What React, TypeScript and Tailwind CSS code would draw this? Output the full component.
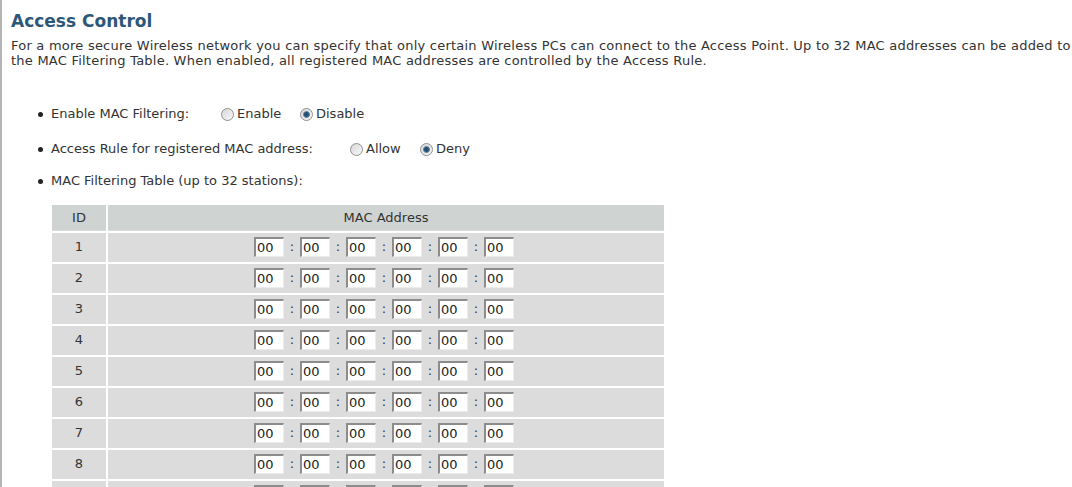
import React from "react";

function Radio({ checked }: { checked?: boolean }) {
  return (
    <span className="inline-flex w-[13px] h-[13px] rounded-full border border-[#8e8f8f] bg-gradient-to-br from-[#d8d8d8] to-[#f8f8f8] items-center justify-center mr-[3px] shrink-0">
      {checked && <span className="block w-[7px] h-[7px] rounded-full bg-[#2a4f6e] border border-[#5c87aa]" />}
    </span>
  );
}

function MacInput({ blank }: { blank?: boolean }) {
  return (
    <span className="inline-flex w-[30px] h-[20px] bg-white border-t-2 border-l-2 border-t-[#8c8c8c] border-l-[#8c8c8c] border-r border-b border-r-[#ececec] border-b-[#ececec] items-center pl-[1px] text-[13px] leading-none text-[#222]">
      {blank ? "" : "00"}
    </span>
  );
}

export default function App() {
  const rows = [1, 2, 3, 4, 5, 6, 7, 8, 9];
  return (
    <div className="w-[1072px] h-[487px] overflow-hidden bg-white border-l-2 border-[#b4b4b4] text-[#333] text-[13px] font-['DejaVu_Sans','Verdana',sans-serif]">
      <div className="pl-[9px] pt-[11px]">
        <h1 className="text-[17px] font-bold text-[#2d5778] leading-[20px]">Access Control</h1>
        <p className="mt-[7px] leading-[15px] whitespace-nowrap tracking-[0.23px]">
          For a more secure Wireless network you can specify that only certain Wireless PCs can connect to the Access Point. Up to 32 MAC addresses can be added to
          <br />
          the MAC Filtering Table. When enabled, all registered MAC addresses are controlled by the Access Rule.
        </p>
      </div>
      <div className="pl-[36px] mt-[36px]">
        <div className="flex items-center h-[20px]">
          <span className="w-[5px] h-[5px] rounded-full bg-[#222] mr-[8px]" />
          <span className="w-[170px]">Enable MAC Filtering:</span>
          <span className="flex items-center w-[79px]"><Radio />Enable</span>
          <span className="flex items-center"><Radio checked />Disable</span>
        </div>
        <div className="flex items-center h-[20px] mt-[15px]">
          <span className="w-[5px] h-[5px] rounded-full bg-[#222] mr-[8px]" />
          <span className="w-[299px]">Access Rule for registered MAC address:</span>
          <span className="flex items-center w-[70px]"><Radio />Allow</span>
          <span className="flex items-center"><Radio checked />Deny</span>
        </div>
        <div className="flex items-center h-[20px] mt-[12px]">
          <span className="w-[5px] h-[5px] rounded-full bg-[#222] mr-[8px]" />
          <span>MAC Filtering Table (up to 32 stations):</span>
        </div>
      </div>
      <div className="ml-[50px] mt-[14px] w-[612px] grid grid-cols-[54px_1fr] gap-[2px]">
        <div className="bg-[#cfd3d2] h-[26px] flex items-center justify-center border-b border-[#dadcdb]">ID</div>
        <div className="bg-[#cfd3d2] h-[26px] flex items-center justify-center border-b border-[#dadcdb]">MAC Address</div>
        {rows.map((r) => (
          <React.Fragment key={r}>
            <div className="bg-[#dcdcdc] h-[29px] flex items-center justify-center pb-[2px]">{r < 9 ? r : ""}</div>
            <div className="bg-[#dcdcdc] h-[29px] flex items-center pl-[146px] pb-[2px]">
              {[0, 1, 2, 3, 4, 5].map((i) => (
                <React.Fragment key={i}>
                  {i > 0 && <span className="w-[16px] text-center">{r < 9 ? ":" : ""}</span>}
                  <MacInput blank={r === 9} />
                </React.Fragment>
              ))}
            </div>
          </React.Fragment>
        ))}
      </div>
    </div>
  );
}
